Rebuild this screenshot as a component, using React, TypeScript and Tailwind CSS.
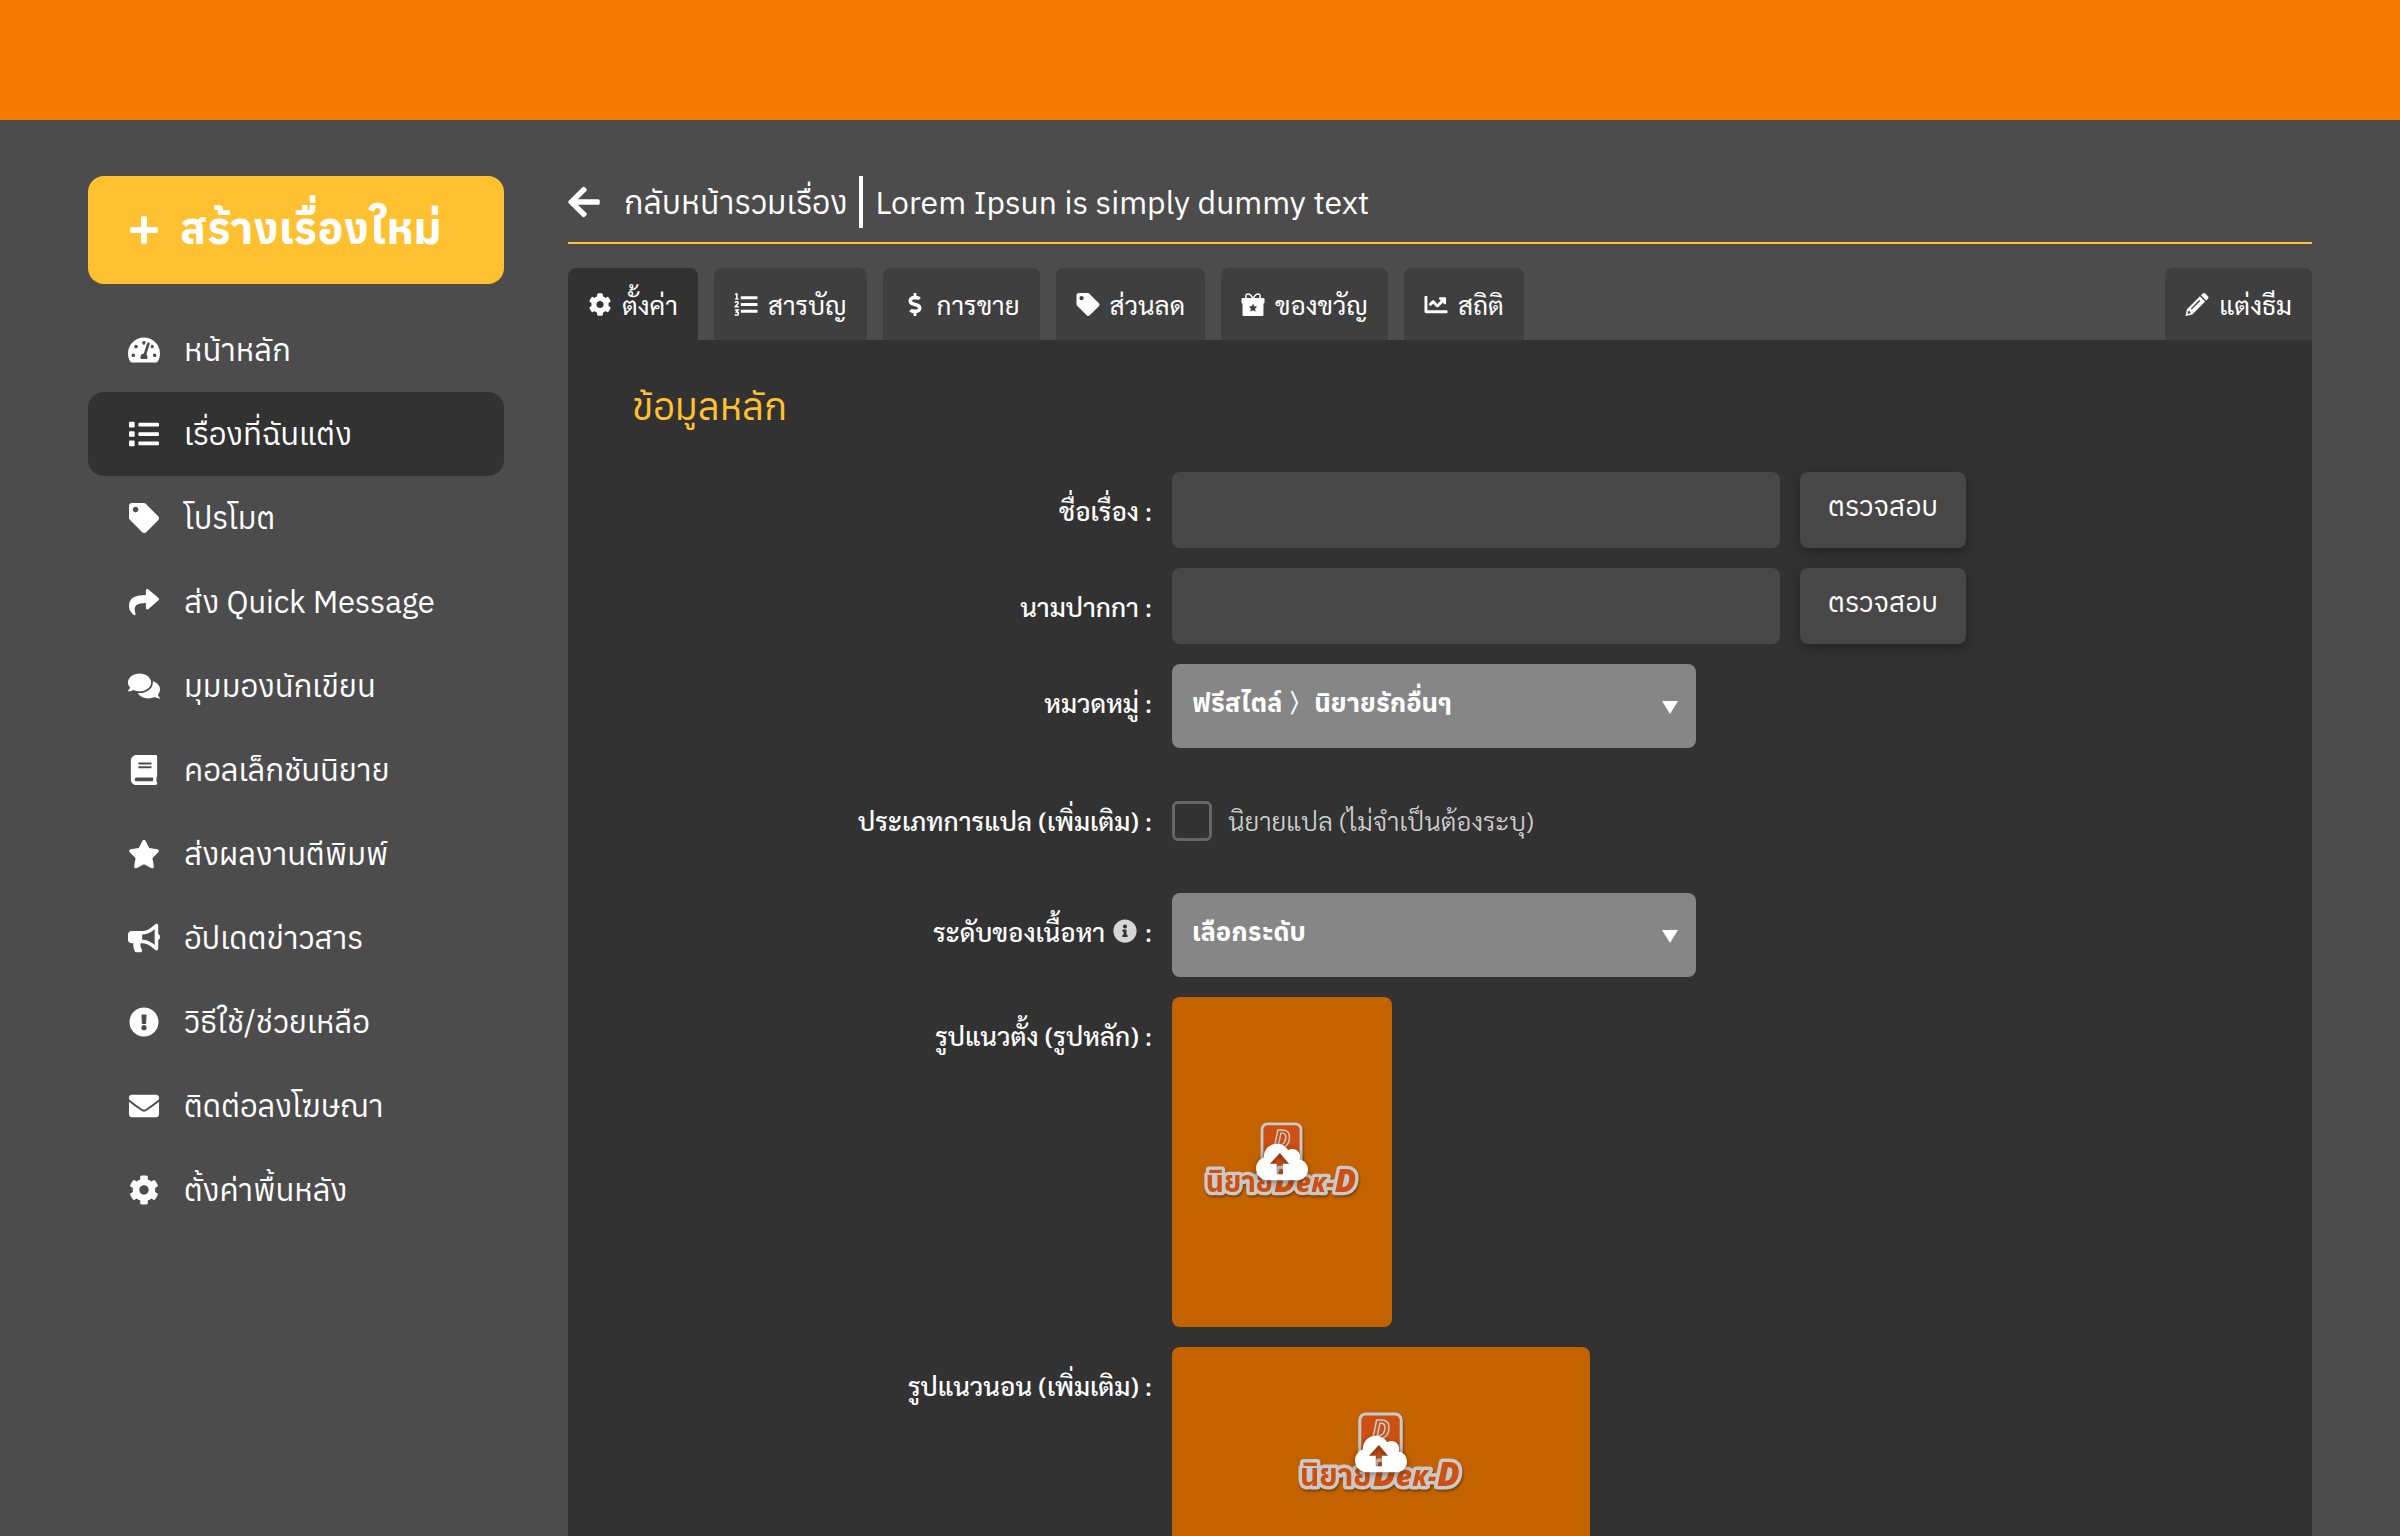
import React, { useState } from 'react';
import type { IconType } from 'react-icons';
import {
  FaArrowLeft,
  FaBook,
  FaBullhorn,
  FaChartLine,
  FaCog,
  FaComments,
  FaDollarSign,
  FaEnvelope,
  FaExclamationCircle,
  FaInfoCircle,
  FaList,
  FaPlus,
  FaShare,
  FaStar,
  FaTachometerAlt,
  FaTag,
} from 'react-icons/fa';

const menu = [
  { icon: FaTachometerAlt, label: 'หน้าหลัก' },
  { icon: FaList, label: 'เรื่องที่ฉันแต่ง', active: true },
  { icon: FaTag, label: 'โปรโมต' },
  { icon: FaShare, label: 'ส่ง Quick Message' },
  { icon: FaComments, label: 'มุมมองนักเขียน' },
  { icon: FaBook, label: 'คอลเล็กชันนิยาย' },
  { icon: FaStar, label: 'ส่งผลงานตีพิมพ์' },
  { icon: FaBullhorn, label: 'อัปเดตข่าวสาร' },
  { icon: FaExclamationCircle, label: 'วิธีใช้/ช่วยเหลือ' },
  { icon: FaEnvelope, label: 'ติดต่อลงโฆษณา' },
  { icon: FaCog, label: 'ตั้งค่าพื้นหลัง' },
];

const ListNumberIcon = () => (
  <svg viewBox="0 0 22 22" fill="currentColor">
    <path d="M6 3h16v3H6zM6 9.500h16v3H6zM6 16h16v3H6z" />
    <path
      d="M.6 1.400 2.200.7V5.600M.6 5.700H3.900M.5 9.200C1 8 3.500 8 3.500 9.600 3.500 11 .6 12.300.6 13.200H3.900M.5 16.300H3.400L1.900 18.200C4.300 18.200 4.300 21.200 2 21.200 1.200 21.200.7 21 .4 20.600"
      fill="none"
      stroke="currentColor"
      strokeWidth="1.500"
    />
  </svg>
);

const GiftIcon = () => (
  <svg viewBox="0 0 22 22" fill="currentColor">
    <path
      d="M10.800 5C9.500 2.200 8 .9 6.200.9 4 .9 3.400 3.200 4.700 5M11.200 5C12.500 2.200 14 .9 15.800.9 18 .9 18.600 3.200 17.300 5"
      fill="none"
      stroke="currentColor"
      strokeWidth="1.400"
    />
    <path
      fillRule="evenodd"
      d="M1 4.800h20a1 1 0 0 1 1 1v3.400a1 1 0 0 1-1 1V21a1 1 0 0 1-1 1H2a1 1 0 0 1-1-1V10.200a1 1 0 0 1-1-1V5.800a1 1 0 0 1 1-1zM11 10l-1.200 2.600-2.800.4 2 2-.5 2.900 2.500-1.400 2.500 1.400-.5-2.900 2-2-2.800-.4z"
    />
  </svg>
);

const PencilIcon = () => (
  <svg viewBox="0 0 22 22" fill="currentColor">
    <path d="M14.800 2.200 16.600.5a1.700 1.700 0 0 1 2.300 0l2.600 2.600a1.700 1.700 0 0 1 0 2.300l-1.700 1.800z" />
    <path
      fillRule="evenodd"
      d="M13.800 3.200 18.800 8.200 6.500 20.600 0 22 1.400 15.500zM13.200 6.800 5 15l.9.900 8.200-8.200zM2.600 17.200 2 20 4.800 19.400 4.500 17.500z"
    />
  </svg>
);

const tabs = [
  { icon: FaCog, label: 'ตั้งค่า', active: true },
  { icon: ListNumberIcon, label: 'สารบัญ' },
  { icon: FaDollarSign, label: 'การขาย' },
  { icon: FaTag, label: 'ส่วนลด' },
  { icon: GiftIcon, label: 'ของขวัญ' },
  { icon: FaChartLine, label: 'สถิติ' },
];

export default function App() {
  const [title, setTitle] = useState('');
  const [penName, setPenName] = useState('');
  const [translated, setTranslated] = useState(false);

  return (
    <div className="min-h-screen bg-[#4c4c4c] text-white font-['Anuphan','Noto_Sans_Thai','Noto_Sans',sans-serif]">
      <header className="h-30 bg-[#f47b00]" />

      <div className="flex gap-16 px-22 pt-14">
        <aside className="w-104 shrink-0">
          <button className="w-full h-27 px-10 mb-6 flex items-center gap-5 rounded-2xl bg-[#ffc130] text-[44px] font-bold">
            <FaPlus className="w-8 h-8" />
            <span className="pb-1">สร้างเรื่องใหม่</span>
          </button>
          <nav>
            {menu.map((item) => (
              <a
                key={item.label}
                href="#"
                className={`h-21 px-10 flex items-center gap-6 rounded-2xl text-[31px] ${item.active ? 'bg-[#323232]' : ''}`}
              >
                <item.icon className="w-8 h-[30px] shrink-0" />
                <span>{item.label}</span>
              </a>
            ))}
          </nav>
        </aside>

        <main className="flex-1 min-w-0">
          <div className="flex items-center pb-3.5 border-b-2 border-[#ffc130] text-[32px]">
            <a href="#" className="flex items-center gap-6">
              <FaArrowLeft className="w-8 h-9" />
              กลับหน้ารวมเรื่อง
            </a>
            <h1 className="ml-3 pl-3 h-13 flex items-center border-l-4 border-white">Lorem Ipsun is simply dummy text</h1>
          </div>

          <div className="mt-6 flex gap-4 font-['Sarabun','Noto_Sans_Thai_Looped','Noto_Sans',sans-serif]">
            {tabs.map((tab) => (
              <Tab key={tab.label} icon={tab.icon} label={tab.label} active={tab.active} />
            ))}
            <div className="ml-auto">
              <Tab icon={PencilIcon} label="แต่งธีม" />
            </div>
          </div>

          <section className="min-h-[1196px] bg-[#323232] px-16 pt-8 pb-8">
            <h2 className="h-25 pt-1 text-[38px] leading-[60px] text-[#ffc130]">ข้อมูลหลัก</h2>

            <div className="grid grid-cols-[520px_1fr] gap-5 text-[26px]">
              <Label htmlFor="title">ชื่อเรื่อง :</Label>
              <div className="flex gap-5">
                <TextBox id="title" value={title} setValue={setTitle} />
                <CheckButton />
              </div>

              <Label htmlFor="pen">นามปากกา :</Label>
              <div className="flex gap-5">
                <TextBox id="pen" value={penName} setValue={setPenName} />
                <CheckButton />
              </div>

              <Label htmlFor="category">หมวดหมู่ :</Label>
              <Dropdown id="category" options={['ฟรีสไตล์ 〉นิยายรักอื่นๆ']} />

              <span className="h-[105px] flex items-center justify-end font-medium font-['Sarabun','Noto_Sans_Thai_Looped','Noto_Sans',sans-serif]">
                ประเภทการแปล (เพิ่มเติม) :
              </span>
              <label className="h-[105px] flex items-center gap-4 text-[#d0d0d0] font-light font-['Sarabun','Noto_Sans_Thai_Looped','Noto_Sans',sans-serif]">
                <input
                  type="checkbox"
                  checked={translated}
                  onChange={(e) => setTranslated(e.target.checked)}
                  className="w-10 h-10 appearance-none rounded-md border-3 border-[#666666] checked:bg-[#ffc130]"
                />
                นิยายแปล (ไม่จำเป็นต้องระบุ)
              </label>

              <Label htmlFor="rating">
                ระดับของเนื้อหา<FaInfoCircle className="w-6 h-6 mx-2 text-[#d6d6d6]" />:
              </Label>
              <Dropdown id="rating" options={['เลือกระดับ']} />

              <Label htmlFor="cover">รูปแนวตั้ง (รูปหลัก) :</Label>
              <button id="cover" aria-label="อัปโหลดรูปแนวตั้ง" className="w-55 h-[330px] grid place-items-center rounded-lg bg-[#c46200]">
                <UploadMark logoClass="w-[160px]" />
              </button>

              <Label htmlFor="banner">รูปแนวนอน (เพิ่มเติม) :</Label>
              <button id="banner" aria-label="อัปโหลดรูปแนวนอน" className="w-[418px] h-[214px] grid place-items-center rounded-lg bg-[#c46200]">
                <UploadMark logoClass="w-[170px]" />
              </button>
            </div>
          </section>
        </main>
      </div>
    </div>
  );
}

interface TabProps {
  icon: IconType | React.FC;
  label: string;
  active?: boolean;
}

const Tab: React.FC<TabProps> = ({ icon: Icon, label, active }) => (
  <button
    className={`h-18 px-5 flex items-center gap-2.5 rounded-t-lg text-[26px] [&_svg]:w-6 [&_svg]:h-[23px] ${
      active ? 'bg-[#323232]' : 'bg-[#3f3f3f]'
    }`}
  >
    <Icon />
    <span>{label}</span>
  </button>
);

const Label = ({ htmlFor, children }: any) => (
  <label
    htmlFor={htmlFor}
    className="h-19 flex items-center justify-end whitespace-pre font-medium font-['Sarabun','Noto_Sans_Thai_Looped','Noto_Sans',sans-serif]"
  >
    {children}
  </label>
);

const TextBox = ({ id, value, setValue }: any) => (
  <input
    id={id}
    type="text"
    value={value}
    onChange={(e) => setValue(e.target.value)}
    className="w-152 h-19 px-5 rounded-lg bg-[#474747] focus:outline-none"
  />
);

const CheckButton = () => (
  <button className="w-[166px] h-19 pb-2 rounded-lg bg-[#474747] text-[28px] shadow-[0_4px_12px_rgba(0,0,0,0.3)]">ตรวจสอบ</button>
);

const Dropdown = ({ id, options }: { id: string; options: string[] }) => (
  <div className="relative w-131">
    <select id={id} className="w-full h-21 px-5 pb-2 appearance-none rounded-lg bg-[#868686] font-bold">
      {options.map((o) => (
        <option key={o}>{o}</option>
      ))}
    </select>
    <svg viewBox="0 0 16 13" className="absolute right-[18px] top-[37px] w-4 h-[13px] pointer-events-none" fill="white">
      <path d="M0 0h16L8 13z" />
    </svg>
  </div>
);

// logo of the novel site with the upload cloud on top
const UploadMark = ({ logoClass }: { logoClass: string }) => (
  <>
    <svg viewBox="0 0 168 84" className={`col-start-1 row-start-1 ${logoClass}`}>
      <g fill="#cb5012" stroke="#c9c9c9" className="drop-shadow-[1px_2px_1px_rgba(0,0,0,0.35)]">
        <rect x="63" y="2" width="41" height="52" rx="6" strokeWidth="3" />
        <text x="75" y="27" fontSize="26" fontStyle="italic" fontWeight="700" strokeWidth="1.500" fontFamily="Open Sans, Noto Sans, sans-serif">
          D
        </text>
        <g fontWeight="700" strokeWidth="7" strokeLinejoin="round" style={{ paintOrder: 'stroke' }}>
          <text x="4" y="73" fontSize="30" fontFamily="Anuphan, Noto Sans Thai, sans-serif">
            นิยาย
          </text>
          <text x="76" y="73" fontSize="33" fontStyle="italic" fontWeight="800" fontFamily="Open Sans, Noto Sans, sans-serif">
            D<tspan fontSize="28">e</tspan>
            <tspan fontSize="23">K</tspan>
            <tspan fontSize="28">-</tspan>D
          </text>
        </g>
      </g>
    </svg>
    <svg
      viewBox="0 0 640 512"
      className="col-start-1 row-start-1 w-[52px] h-[42px] drop-shadow-[0_2px_3px_rgba(0,0,0,0.4)]"
      fill="currentColor"
    >
      <path
        fillRule="evenodd"
        d="M537.600 226.600c4.100-10.700 6.400-22.400 6.400-34.600 0-53-43-96-96-96-19.700 0-38.100 6-53.300 16.200C367 64.200 315.300 32 256 32c-88.400 0-160 71.600-160 160 0 2.700.1 5.400.2 8.100C40.200 219.800 0 273.200 0 336c0 79.500 64.500 144 144 144h368c70.700 0 128-57.300 128-128 0-61.900-44-113.600-102.400-125.400zM294 145 406 278H331V407H255V278H172z"
      />
    </svg>
  </>
);
